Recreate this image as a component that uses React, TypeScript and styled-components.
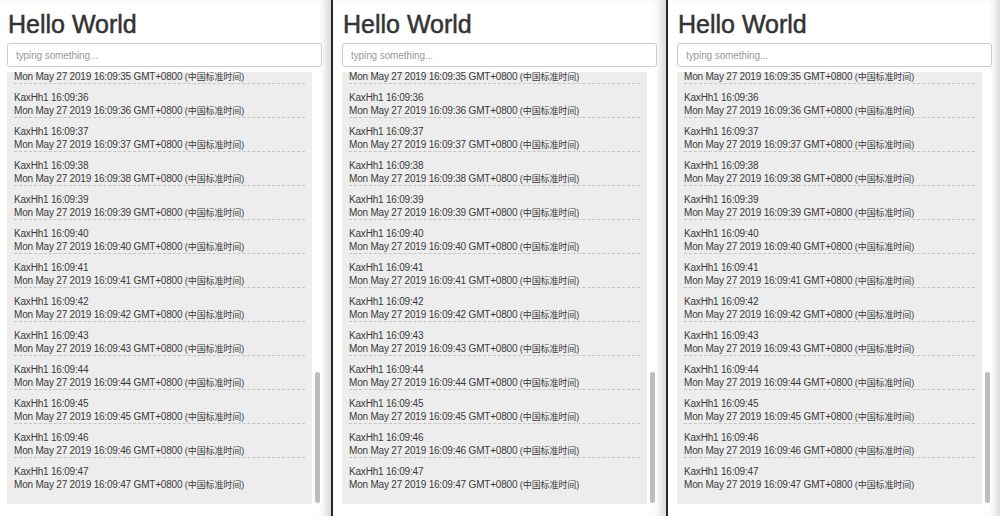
import React, { useLayoutEffect, useRef } from "react";
import styled, { createGlobalStyle } from "styled-components";

const Global = createGlobalStyle`
  html, body { margin: 0; padding: 0; background: #fff; }
  body { font-family: "Liberation Sans", Arial, "Noto Sans CJK SC", sans-serif; }
  * { box-sizing: border-box; }
`;

const Page = styled.div`
  display: flex;
  width: 1000px;
  height: 516px;
  overflow: hidden;
  background: #fff;
`;

const Pane = styled.section`
  flex: 0 0 auto;
  width: 333px;
  height: 516px;
  margin-right: 2px;
  padding: 9px 11px 0 7px;
  border-right: 2px solid #262626;
  box-shadow: inset -10px 0 9px -5px rgba(0, 0, 0, 0.16);
  display: flex;
  flex-direction: column;
`;

const Title = styled.h1`
  margin: 0 0 4px 1px;
  font-size: 25px;
  line-height: 30px;
  font-weight: 400;
  color: #333;
  -webkit-text-stroke: 0.5px #333;
`;

const Input = styled.input`
  width: 315px;
  height: 24px;
  margin: 0;
  padding: 0 8px;
  border: 1px solid #ccc;
  border-radius: 3px;
  font-family: "Liberation Sans", Arial, sans-serif;
  font-size: 10px;
  letter-spacing: -0.1px;
  color: #333;
  outline: none;
  &::placeholder { color: #9a9a9a; }
`;

const ListBox = styled.div`
  display: flex;
  width: 315px;
  height: 432px;
  margin-top: 5px;
`;

const ListBody = styled.div`
  flex: 1 1 auto;
  min-width: 0;
  padding: 0 7px 12px 7px;
  background: #ededed;
  overflow: hidden;
`;

const Track = styled.div`
  flex: 0 0 10px;
  display: flex;
  flex-direction: column;
  justify-content: flex-end;
  padding: 0 2px 1px 3px;
  background: #fff;
`;

const Thumb = styled.div`
  height: 131px;
  border-radius: 3px;
  background: #bdbdbd;
`;

const Row = styled.div<{ $last?: boolean }>`
  display: grid;
  grid-auto-rows: 13px;
  padding-top: 7px;
  border-bottom: 1px dashed ${(p) => (p.$last ? "transparent" : "#c4c4c4")};
  font-size: 10px;
  line-height: 13px;
  letter-spacing: -0.2px;
  color: #3a3a3a;
  white-space: nowrap;
`;

const Line = styled.div`
  height: 13px;
  overflow: visible;
`;

const Zone = styled.span`
  font-size: 9px;
  line-height: 1;
  letter-spacing: -0.1px;
`;

const seconds = Array.from({ length: 42 }, (_, i) => 6 + i);
const pad = (n: number) => String(n).padStart(2, "0");

function Panel() {
  const ref = useRef<HTMLDivElement>(null);
  useLayoutEffect(() => {
    if (ref.current) ref.current.scrollTop = ref.current.scrollHeight;
  }, []);
  return (
    <Pane>
      <Title>Hello World</Title>
      <Input placeholder="typing something..." />
      <ListBox>
        <ListBody ref={ref}>
          {seconds.map((s, i) => (
            <Row key={s} $last={i === seconds.length - 1}>
              <Line>KaxHh1 16:09:{pad(s)}</Line>
              <Line>
                Mon May 27 2019 16:09:{pad(s)} GMT+0800 <Zone>(中国标准时间)</Zone>
              </Line>
            </Row>
          ))}
        </ListBody>
        <Track>
          <Thumb />
        </Track>
      </ListBox>
    </Pane>
  );
}

export default function App() {
  return (
    <Page>
      <Global />
      <Panel />
      <Panel />
      <Panel />
    </Page>
  );
}
